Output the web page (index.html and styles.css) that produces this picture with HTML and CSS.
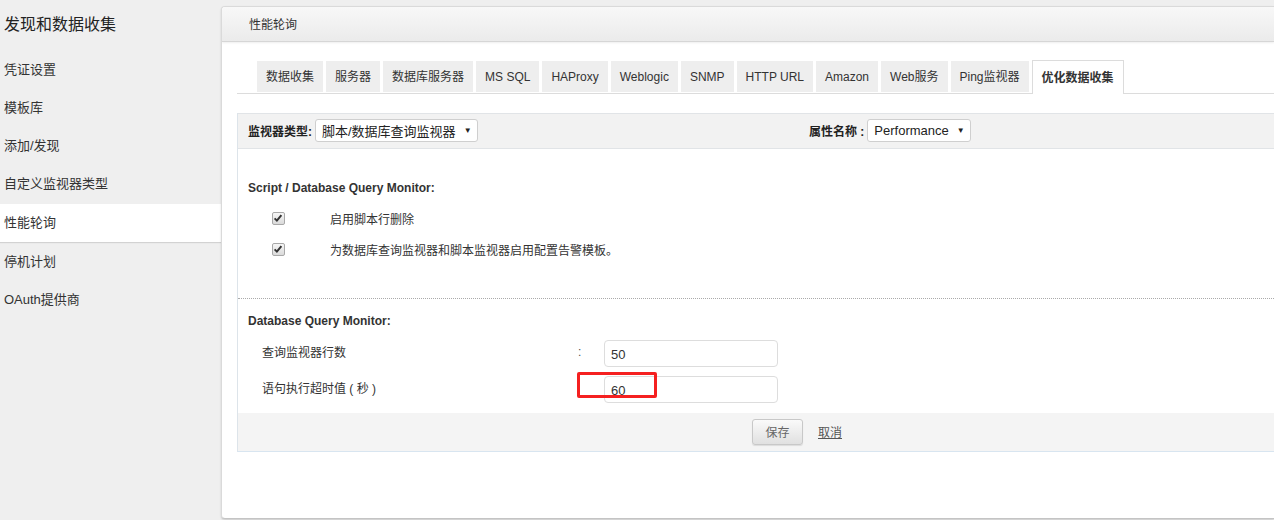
FILE: index.html
```html
<!DOCTYPE html>
<html lang="zh-CN">
<head>
    <meta charset="UTF-8">
    <title>性能轮询</title>
    <link rel="stylesheet" href="styles.css">
</head>
<body>
    <div class="layout">
        <aside class="sidebar">
            <h2 class="side-title">发现和数据收集</h2>
            <ul class="side-menu">
                <li>凭证设置</li>
                <li>模板库</li>
                <li>添加/发现</li>
                <li>自定义监视器类型</li>
                <li class="active">性能轮询</li>
                <li>停机计划</li>
                <li>OAuth提供商</li>
            </ul>
        </aside>

        <main class="panel">
            <div class="panel-head">性能轮询</div>

            <div class="panel-body">
                <ul class="tabs">
                    <li>数据收集</li>
                    <li>服务器</li>
                    <li>数据库服务器</li>
                    <li>MS SQL</li>
                    <li>HAProxy</li>
                    <li>Weblogic</li>
                    <li>SNMP</li>
                    <li>HTTP URL</li>
                    <li>Amazon</li>
                    <li>Web服务</li>
                    <li>Ping监视器</li>
                    <li class="active">优化数据收集</li>
                </ul>

                <form class="poll-form">
                    <div class="toolbar">
                        <div class="tool-group type-group">
                            <label>监视器类型:</label>
                            <span class="select">脚本/数据库查询监视器<i class="arrow">▼</i></span>
                        </div>
                        <div class="tool-group">
                            <label>属性名称 :</label>
                            <span class="select">Performance<i class="arrow">▼</i></span>
                        </div>
                    </div>

                    <!-- script monitor options -->
                    <div class="section script-section">
                        <h4>Script / Database Query Monitor:</h4>
                        <div class="check-row">
                            <span class="check-cell">
                                <span class="checkbox"><svg viewBox="0 0 12 12" width="12" height="12"><path d="M2.6 6.4 L4.9 8.6 L9.4 3.2" fill="none" stroke="#333" stroke-width="2"/></svg></span>
                            </span>
                            <span>启用脚本行删除</span>
                        </div>
                        <div class="check-row">
                            <span class="check-cell">
                                <span class="checkbox"><svg viewBox="0 0 12 12" width="12" height="12"><path d="M2.6 6.4 L4.9 8.6 L9.4 3.2" fill="none" stroke="#333" stroke-width="2"/></svg></span>
                            </span>
                            <span>为数据库查询监视器和脚本监视器启用配置告警模板。</span>
                        </div>
                    </div>

                    <!-- database query monitor -->
                    <div class="section query-section">
                        <h4>Database Query Monitor:</h4>
                        <div class="field-row">
                            <span class="field-label">查询监视器行数</span>
                            <span class="field-colon">:</span>
                            <input class="field-input" type="text" value="50">
                        </div>
                        <div class="field-row">
                            <span class="field-label">语句执行超时值 ( 秒 )</span>
                            <span class="field-colon"><span class="mark"></span></span>
                            <input class="field-input" type="text" value="60">
                        </div>
                    </div>

                    <div class="form-actions">
                        <button type="button" class="btn-save">保存</button>
                        <a href="#" class="link-cancel">取消</a>
                    </div>
                </form>
            </div>
        </main>
    </div>
</body>
</html>
```

FILE: styles.css
```css
body {
    margin: 0;
    font-family: "Liberation Sans", "Noto Sans CJK SC", sans-serif;
    font-size: 12px;
    color: #333;
    background-color: #efefef;
    overflow: hidden;
}

ul {
    list-style: none;
    margin: 0;
    padding: 0;
}

.layout {
    display: flex;
    height: 520px;
}

/* Sidebar */
.sidebar {
    width: 221px;
    flex: none;
}

.side-title {
    margin: 0;
    height: 51px;
    line-height: 50px;
    padding-left: 4px;
    font-size: 16px;
    font-weight: normal;
    color: #222;
}

.side-menu li {
    height: 38px;
    line-height: 38px;
    padding-left: 4px;
    font-size: 13px;
    color: #333;
}

.side-menu li.active {
    margin-top: 1px;
    background-color: #fff;
    box-shadow: 0 1px 1px rgba(0, 0, 0, 0.12);
}

.side-menu li.active + li {
    margin-top: 1px;
}

/* Main panel */
.panel {
    flex: 1;
    margin-top: 6px;
    height: 511px;
    background-color: #fff;
    border: 1px solid #dadada;
    border-right: none;
    border-bottom-color: #c4c4c4;
    border-radius: 4px 0 0 4px;
    box-shadow: 0 1px 2px rgba(0, 0, 0, 0.15);
    overflow: hidden;
}

.panel-head {
    height: 34px;
    line-height: 37px;
    padding-left: 27px;
    font-size: 12px;
    color: #333;
    background: linear-gradient(#f8f8f8, #ebebeb);
    border-bottom: 1px solid #d6d6d6;
    box-shadow: 0 1px 2px rgba(0, 0, 0, 0.07);
}

.panel-body {
    padding: 18px 0 0 15px;
}

/* Tabs */
.tabs {
    display: flex;
    align-items: flex-end;
    gap: 3px;
    padding-left: 20px;
    border-bottom: 1px solid #dcdcdc;
}

.tabs li {
    height: 31px;
    line-height: 32px;
    margin-bottom: 1px;
    padding: 0 9px;
    background-color: #eee;
    color: #333;
    white-space: nowrap;
}

.tabs li.active {
    height: 33px;
    line-height: 35px;
    margin-bottom: -1px;
    padding: 0 9px;
    background-color: #fff;
    border: 1px solid #dcdcdc;
    border-bottom: none;
    font-weight: bold;
}

/* Form box */
.poll-form {
    margin-top: 19px;
    border-left: 1px solid #dde4ea;
    border-bottom: 1px solid #d8e5f0;
}

.toolbar {
    display: flex;
    align-items: center;
    height: 34px;
    padding-left: 10px;
    background-color: #f2f2f2;
    border-top: 1px solid #e1e4e7;
    border-bottom: 1px solid #e1e4e7;
}

.tool-group {
    display: flex;
    align-items: center;
    gap: 3px;
    margin-top: -2px;
}

.type-group {
    width: 561px;
    flex: none;
}

.tool-group label {
    font-weight: bold;
    color: #222;
}

.select {
    display: inline-flex;
    align-items: center;
    height: 21px;
    padding: 0 5px 0 6px;
    font-size: 13px;
    color: #222;
    background-color: #fff;
    border: 1px solid #cfcfcf;
    border-radius: 3px;
}

.select .arrow {
    font-style: normal;
    font-size: 8px;
    margin-left: 8px;
    color: #222;
}

/* Sections */
.section h4 {
    margin: 0;
    line-height: 16px;
    font-size: 12px;
    font-weight: bold;
    color: #333;
}

.script-section {
    padding: 31px 0 33px 10px;
    border-bottom: 1px dotted #aaa;
}

.script-section h4 {
    margin-bottom: 7px;
}

.check-row {
    display: flex;
    align-items: center;
    height: 31px;
}

.check-cell {
    width: 58px;
    padding-left: 24px;
    flex: none;
}

.checkbox {
    display: block;
    width: 11px;
    height: 11px;
    border: 1px solid #a8a8a8;
    border-radius: 2px;
    background: linear-gradient(#f6f6f6, #dadada);
}

.checkbox svg {
    display: block;
    margin: -1px 0 0 -1px;
}

.query-section {
    padding: 14px 0 10px 10px;
}

.query-section h4 {
    margin-bottom: 11px;
}

.field-row {
    display: flex;
    align-items: flex-start;
    padding-left: 14px;
    margin-bottom: 9px;
}

.field-row:last-child {
    margin-bottom: 0;
}

.field-label {
    width: 316px;
    padding-top: 3px;
    font-size: 12px;
    color: #333;
    flex: none;
}

.field-colon {
    position: relative;
    width: 26px;
    padding-top: 5px;
    color: #555;
    flex: none;
}

.field-input {
    box-sizing: border-box;
    width: 174px;
    height: 27px;
    padding: 2px 6px 0;
    font-family: "Liberation Sans", sans-serif;
    font-size: 13px;
    color: #333;
    border: 1px solid #ddd;
    border-radius: 4px;
    outline: none;
}

/* annotation over the timeout field */
.mark {
    position: absolute;
    left: -1px;
    top: -4px;
    width: 74px;
    height: 20px;
    border: 3px solid #f52020;
    border-radius: 2px;
}

/* Footer actions */
.form-actions {
    display: flex;
    align-items: center;
    height: 38px;
    padding-left: 514px;
    background-color: #f4f4f4;
}

.btn-save {
    width: 51px;
    height: 26px;
    margin-top: -1px;
    font-family: "Liberation Sans", "Noto Sans CJK SC", sans-serif;
    font-size: 12px;
    color: #666;
    background: linear-gradient(#fafafa, #e0e0e0);
    border: 1px solid #c8c8c8;
    border-radius: 3px;
    box-shadow: 0 1px 1px rgba(0, 0, 0, 0.1);
}

.link-cancel {
    margin-left: 15px;
    margin-top: -1px;
    color: #555;
    text-decoration: underline;
}
```
